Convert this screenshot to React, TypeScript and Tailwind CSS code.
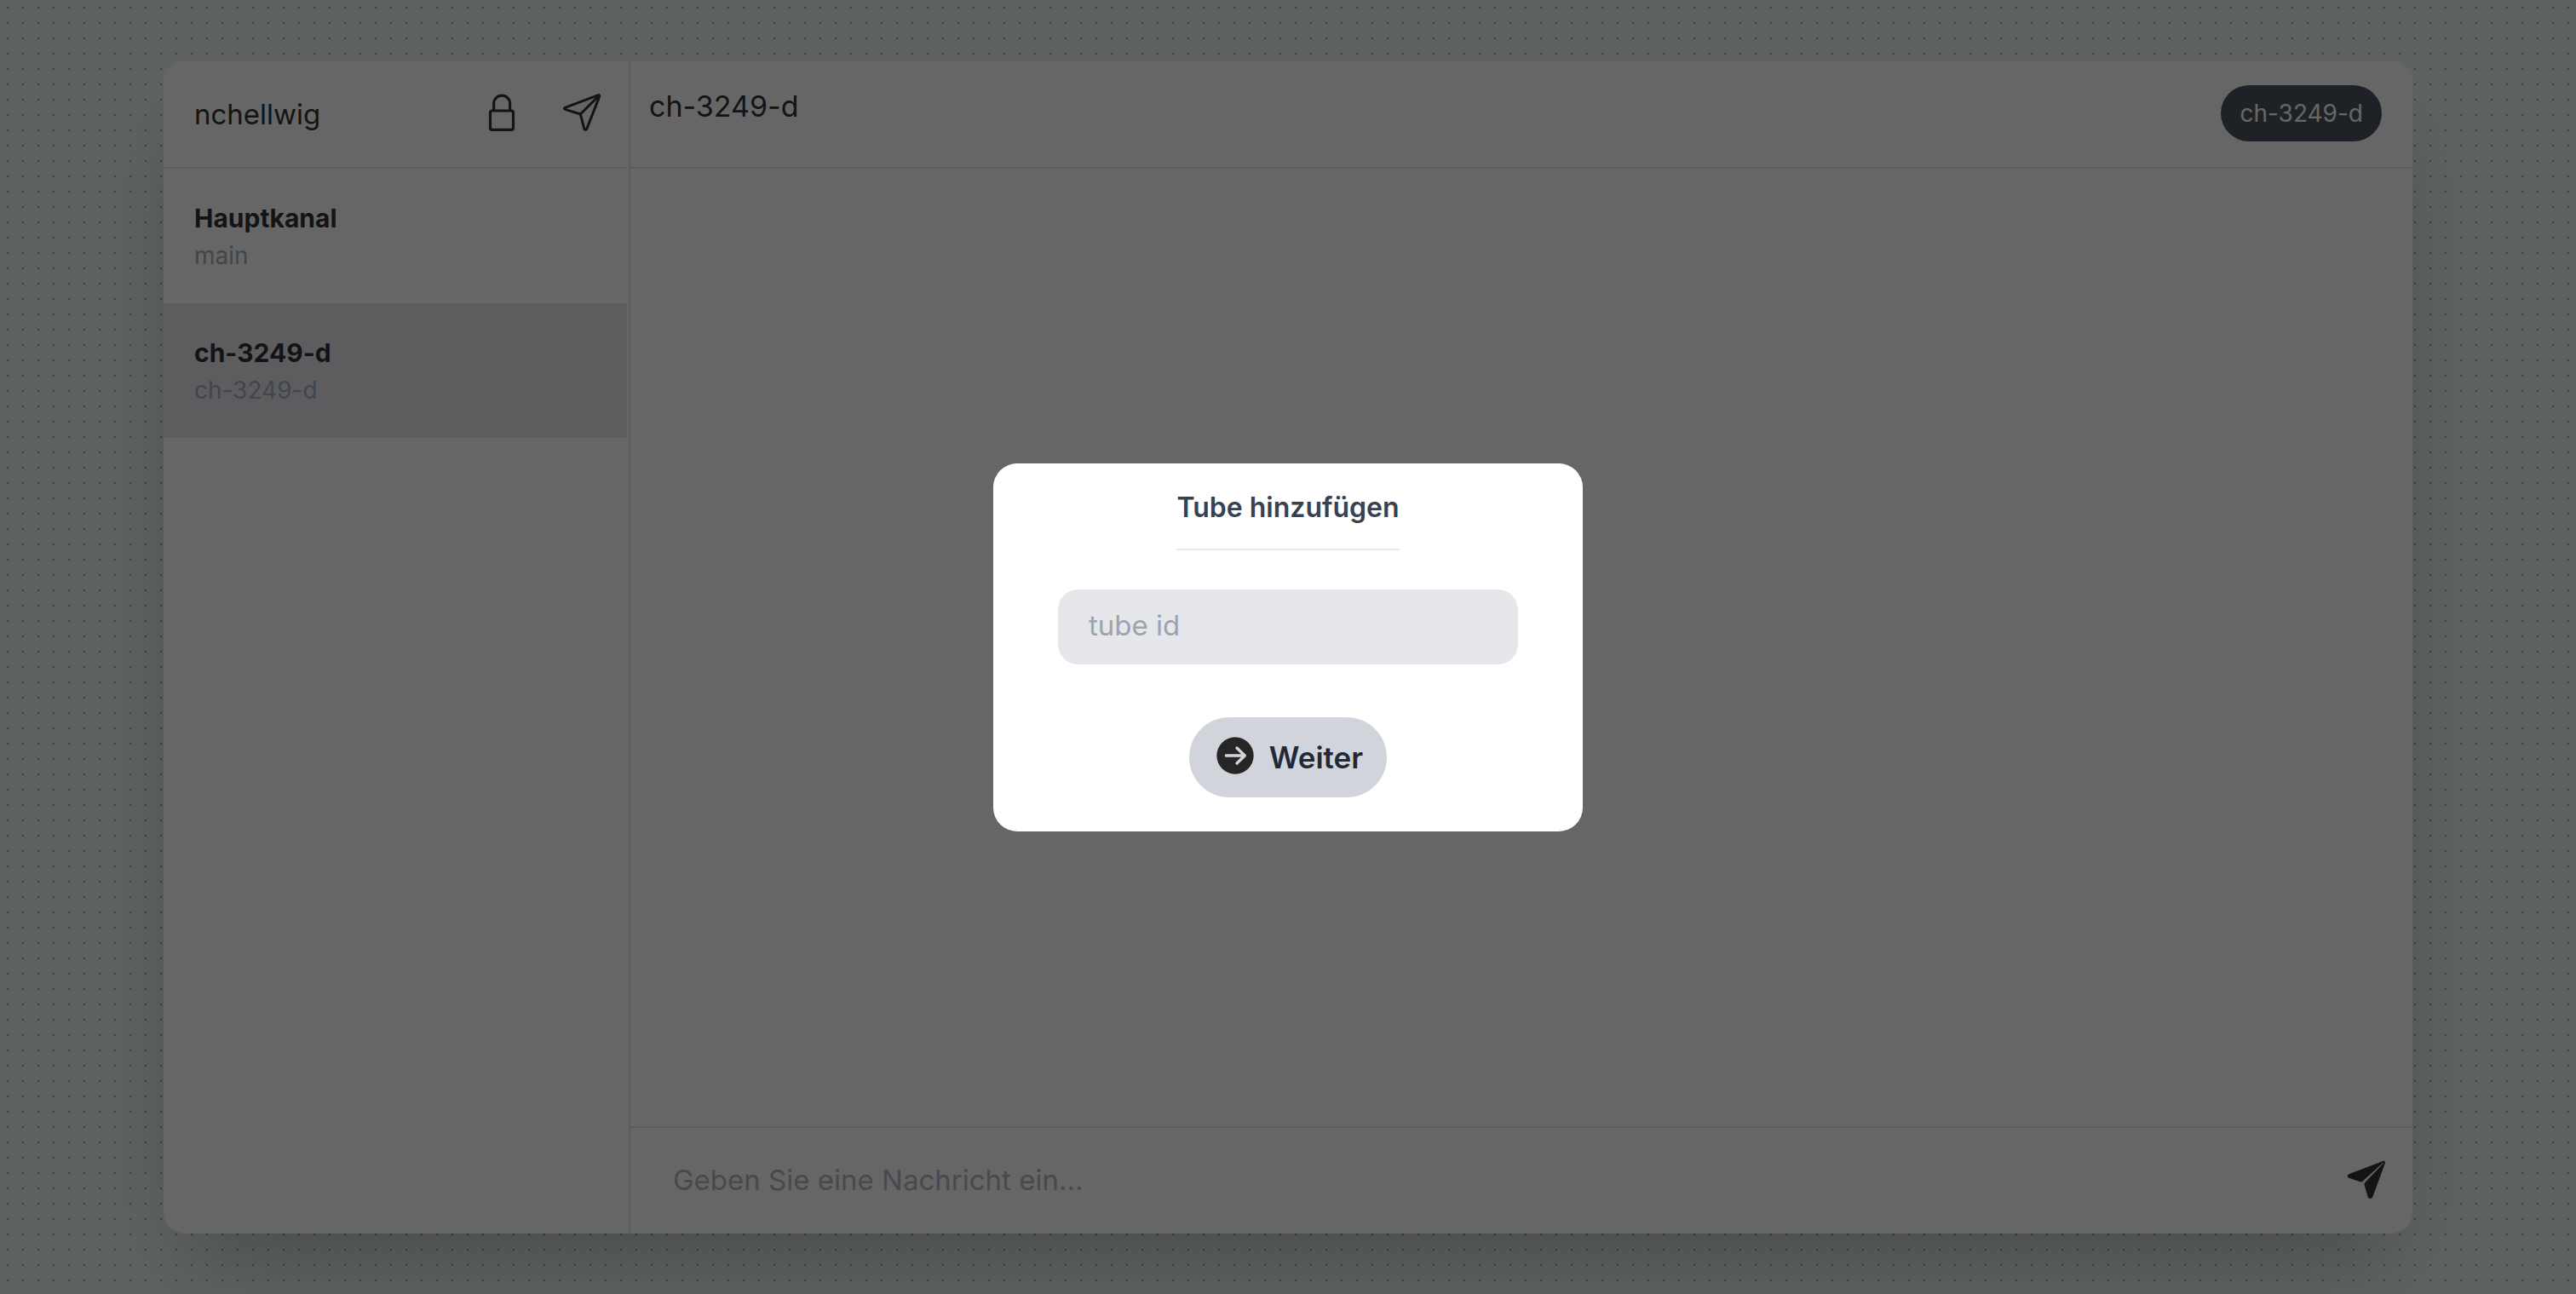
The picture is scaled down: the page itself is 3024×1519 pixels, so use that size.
import type { ReactNode } from "react";

const channels = [
  { name: "Hauptkanal", id: "main", active: false },
  { name: "ch-3249-d", id: "ch-3249-d", active: true },
];

function LockIcon() {
  return (
    <svg viewBox="15 51 144 144" className="size-12" fill="none" stroke="currentColor" strokeWidth="9.500" aria-hidden="true">
      <rect x="46.5" y="117" width="81" height="67" rx="7" />
      <path d="M59 117V92a28.500 28.500 0 0 1 57 0v25" />
    </svg>
  );
}

function SendOutlineIcon() {
  return (
    <svg viewBox="297 51 144 144" className="size-12" fill="none" stroke="currentColor" strokeWidth="9" strokeLinecap="round" strokeLinejoin="round" aria-hidden="true">
      <path d="M427 62L310 106q-5 3 0 6L364 129L378 182q4 5 8 0L431 67q1-6-4-5Z" />
      <path d="M364 129L429 64" />
    </svg>
  );
}

function SendFilledIcon() {
  return (
    <svg viewBox="162 183 144 144" className="size-12" fill="currentColor" aria-hidden="true">
      <path d="M291 189L174 234Q167 237 167 242Q167 247 174 249L212 262Q217 264 222 259L292 195Q296 193 293 197L229 264Q225 268 227 274L239 315Q241 321 247 321Q253 321 256 315L299 198Q302 186 291 189Z" />
    </svg>
  );
}

function ArrowCircleIcon() {
  return (
    <svg viewBox="142 105 132 132" className="size-11" aria-hidden="true">
      <circle cx="208" cy="171" r="65" fill="#262626" />
      <path d="M176 171h66M214 144l28 27l-28 27" fill="none" stroke="#d1d5db" strokeWidth="10" strokeLinecap="round" strokeLinejoin="round" />
    </svg>
  );
}

function IconButton({ label, children }: { label: string; children: ReactNode }) {
  return (
    <button type="button" aria-label={label} className="shrink-0">
      {children}
    </button>
  );
}

function Sidebar() {
  return (
    <aside className="flex w-[548px] shrink-0 flex-col border-r-2 border-[#e5e7eb] pr-0.5">
      <div className="flex h-[126px] shrink-0 items-center border-b-2 border-[#e5e7eb] pr-[29px] pl-9">
        <span className="flex-1 text-[33px] leading-10">nchellwig</span>
        <div className="flex gap-[46px] pb-1">
          <IconButton label="Sperren">
            <LockIcon />
          </IconButton>
          <IconButton label="Tube hinzufügen">
            <SendOutlineIcon />
          </IconButton>
        </div>
      </div>
      <nav>
        {channels.map((c) => (
          <a
            key={c.id}
            href={"#" + c.id}
            className={"flex h-[158px] flex-col justify-center px-9 pt-0.5 " + (c.active ? "bg-[#e9e9ed]" : "")}
          >
            <span className="text-[30px] leading-11 font-bold">{c.name}</span>
            <span className="text-[28px] leading-11 text-[#a0aec0]">{c.id}</span>
          </a>
        ))}
      </nav>
    </aside>
  );
}

function Chat() {
  return (
    <main className="flex min-w-0 flex-1 flex-col">
      <header className="flex h-[126px] shrink-0 items-start justify-between border-b-2 border-[#e5e7eb] pt-7 pr-9 pl-[22px]">
        <h1 className="text-[34px] leading-[50px]">ch-3249-d</h1>
        <span className="rounded-full bg-[#4b5563] px-[22px] py-3 text-[28px] leading-[42px] text-white">ch-3249-d</span>
      </header>
      <div className="flex-1" />
      <form className="flex h-[126px] shrink-0 items-center border-t-2 border-[#e5e7eb] pr-[30px] pb-0.5 pl-[50px]">
        <input
          type="text"
          aria-label="Nachricht"
          placeholder="Geben Sie eine Nachricht ein..."
          className="min-w-0 flex-1 bg-transparent text-[33px] leading-12 outline-none placeholder:text-[#b4b7c0]"
        />
        <IconButton label="Senden">
          <SendFilledIcon />
        </IconButton>
      </form>
    </main>
  );
}

function TubeDialog() {
  return (
    <div className="fixed inset-0 flex items-center justify-center bg-black/60">
      <div role="dialog" aria-modal="true" aria-labelledby="dialog-title" className="flex w-[692px] flex-col items-center rounded-[28px] bg-white px-[76px] pt-[30px] pb-10">
        <h2 id="dialog-title" className="border-b-2 border-[#e5e7eb] pb-[26px] text-[32px] leading-11 font-semibold text-[#374151]">
          Tube hinzufügen
        </h2>
        <input
          type="text"
          aria-label="tube id"
          placeholder="tube id"
          className="mt-[46px] h-22 w-full rounded-3xl bg-[#e5e7eb] px-9 pb-1 text-[33px] outline-none placeholder:text-[#9ca3af]"
        />
        <button type="button" className="mt-[62px] flex items-center rounded-full bg-[#d1d5db] py-[23px] pr-7 pl-8 text-[35px] leading-12 font-semibold text-[#1f2937]">
          <span className="mr-[18px] pb-1">
            <ArrowCircleIcon />
          </span>
          Weiter
        </button>
      </div>
    </div>
  );
}

export default function App() {
  return (
    <div className="flex h-screen bg-[#ecf8f3] bg-[radial-gradient(circle,#5ec88a_1px,transparent_1px)] bg-[length:18px_18px] px-48 pt-[72px] pb-[71px] font-['Inter',sans-serif] text-[#333333]">
      <div className="flex flex-1 overflow-hidden rounded-3xl bg-white shadow-[0_50px_100px_-24px_rgba(0,0,0,0.25)]">
        <Sidebar />
        <Chat />
      </div>
      <TubeDialog />
    </div>
  );
}
